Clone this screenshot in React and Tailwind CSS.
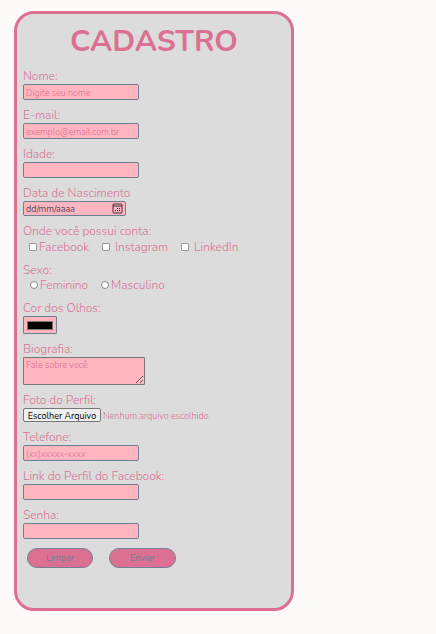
import React from "react";

const box =
  "block h-4 w-[116px] rounded-[2px] border border-[#708090] bg-[#ffb6c1] px-[2px] pt-[1px] text-[9px] leading-3 text-[#db7093] placeholder:text-[#db7093] placeholder:opacity-100 outline-none";

function Field({ id, label, children }) {
  return (
    <div>
      <label htmlFor={id} className="block h-4 w-fit leading-4">
        {label}
      </label>
      {children}
    </div>
  );
}

function TextField({ id, label, type = "text", placeholder }) {
  return (
    <Field id={id} label={label}>
      <input id={id} name={id} type={type} placeholder={placeholder} className={box} />
    </Field>
  );
}

function Check({ label, spaced }) {
  return (
    <label className={`flex items-center ${spaced ? "gap-[5px]" : "gap-[2px]"}`}>
      <input
        type="checkbox"
        name="contas"
        value={label}
        className="size-2 appearance-none rounded-[1px] border border-[#9a9a9a] bg-white checked:bg-[#db7093]"
      />
      {label}
    </label>
  );
}

function Radio({ label }) {
  return (
    <label className="flex items-center gap-[2px]">
      <input
        type="radio"
        name="sexo"
        value={label}
        className="size-2 appearance-none rounded-full border border-[#8a8a8a] bg-white checked:bg-[#db7093]"
      />
      {label}
    </label>
  );
}

function CalendarIcon() {
  return (
    <svg viewBox="0 0 11 11" className="size-[11px]" fill="none" stroke="#2b2024" aria-hidden="true">
      <rect x="1" y="1" width="9" height="9" rx="1" strokeWidth="0.9" />
      <path d="M1 3h9" strokeWidth="0.9" />
      <path d="M5 5.5h1M7 5.5h1M3 7.5h1M5 7.5h1M7 7.5h1" />
    </svg>
  );
}

export default function App() {
  return (
    <main className="min-h-screen bg-[#fffafa] px-[14px] py-[11px] font-['Nunito','Open_Sans',sans-serif] text-[12px] font-light text-[#db7093]">
      <form
        className="w-full max-w-[280px] rounded-[20px] border-[3px] border-[#db7093] bg-[#dcdcdc] px-[6px] pt-[10px] pb-10"
        onSubmit={(e) => e.preventDefault()}
      >
        <h1 className="mb-2 text-center text-[30px] leading-9 font-bold">CADASTRO</h1>

        <div className="flex flex-col gap-[7px]">
          <TextField id="nome" label="Nome:" placeholder="Digite seu nome" />
          <TextField id="email" label="E-mail:" type="email" placeholder="exemplo@email.com.br" />
          <TextField id="idade" label="Idade:" />

          <Field id="nascimento" label="Data de Nascimento">
            <div className="flex h-[15px] w-[103px] items-center rounded-[2px] border border-[#708090] bg-[#ffb6c1] px-[2px]">
              <input
                id="nascimento"
                name="nascimento"
                type="text"
                placeholder="dd/mm/aaaa"
                className="min-w-0 flex-1 bg-transparent pt-[1px] text-[9px] leading-3 font-normal text-[#555] outline-none placeholder:text-[#5c4a55]"
              />
              <button type="button" aria-label="Abrir calendário">
                <CalendarIcon />
              </button>
            </div>
          </Field>

          <fieldset>
            <legend className="block h-4 leading-4">Onde você possui conta:</legend>
            <div className="flex h-4 items-center gap-[13px] pl-[6px] leading-4">
              <Check label="Facebook" />
              <Check label="Instagram" spaced />
              <Check label="LinkedIn" spaced />
            </div>
          </fieldset>

          <fieldset>
            <legend className="block h-4 leading-4">Sexo:</legend>
            <div className="mb-[1px] flex h-[14px] items-center gap-[13px] pl-[7px] leading-4">
              <Radio label="Feminino" />
              <Radio label="Masculino" />
            </div>
          </fieldset>

          <Field id="olhos" label="Cor dos Olhos:">
            <input
              id="olhos"
              name="olhos"
              type="color"
              defaultValue="#000000"
              className="block h-[18px] w-[34px] rounded-[1px] border border-[#708090] bg-[#ffb6c1] px-[3px] pt-1 pb-[3px] [&::-webkit-color-swatch]:rounded-none [&::-webkit-color-swatch]:border-[#777] [&::-webkit-color-swatch-wrapper]:p-0"
            />
          </Field>

          <Field id="biografia" label="Biografia:">
            <textarea
              id="biografia"
              name="biografia"
              placeholder="Fale sobre você"
              className="block h-7 w-[122px] resize overflow-hidden rounded-[1px] border border-[#767676] bg-[#ffb6c1] px-[2px] py-[1px] text-[9px] leading-3 outline-none placeholder:text-[#db7093] placeholder:opacity-100"
            />
          </Field>

          <div>
            <span className="block h-4 leading-4">Foto do Perfil:</span>
            <div className="flex h-[14px] items-center gap-[2px] text-[9px] leading-3">
              <input id="foto" name="foto" type="file" className="sr-only" />
              <label
                htmlFor="foto"
                className="flex h-[14px] w-[78px] items-center justify-center rounded-[2px] border border-[#767676] bg-[#efefef] pt-[1px] font-normal whitespace-nowrap text-black"
              >
                Escolher Arquivo
              </label>
              <span className="pt-[1px] whitespace-nowrap">Nenhum arquivo escolhido</span>
            </div>
          </div>

          <TextField id="telefone" label="Telefone:" type="tel" placeholder="(xx)xxxxx-xxxx" />
          <TextField id="facebook" label="Link do Perfil do Facebook:" type="url" />
          <TextField id="senha" label="Senha:" type="password" />
        </div>

        <div className="mt-[9px] flex gap-4 pl-1 text-[9px] font-normal text-[#708090]">
          <button type="reset" className="h-5 w-[66px] rounded-full border border-[#708090] bg-[#db7093] pt-[1px]">
            Limpar
          </button>
          <button type="submit" className="h-5 w-[67px] rounded-full border border-[#708090] bg-[#db7093] pt-[1px]">
            Enviar
          </button>
        </div>
      </form>
    </main>
  );
}
